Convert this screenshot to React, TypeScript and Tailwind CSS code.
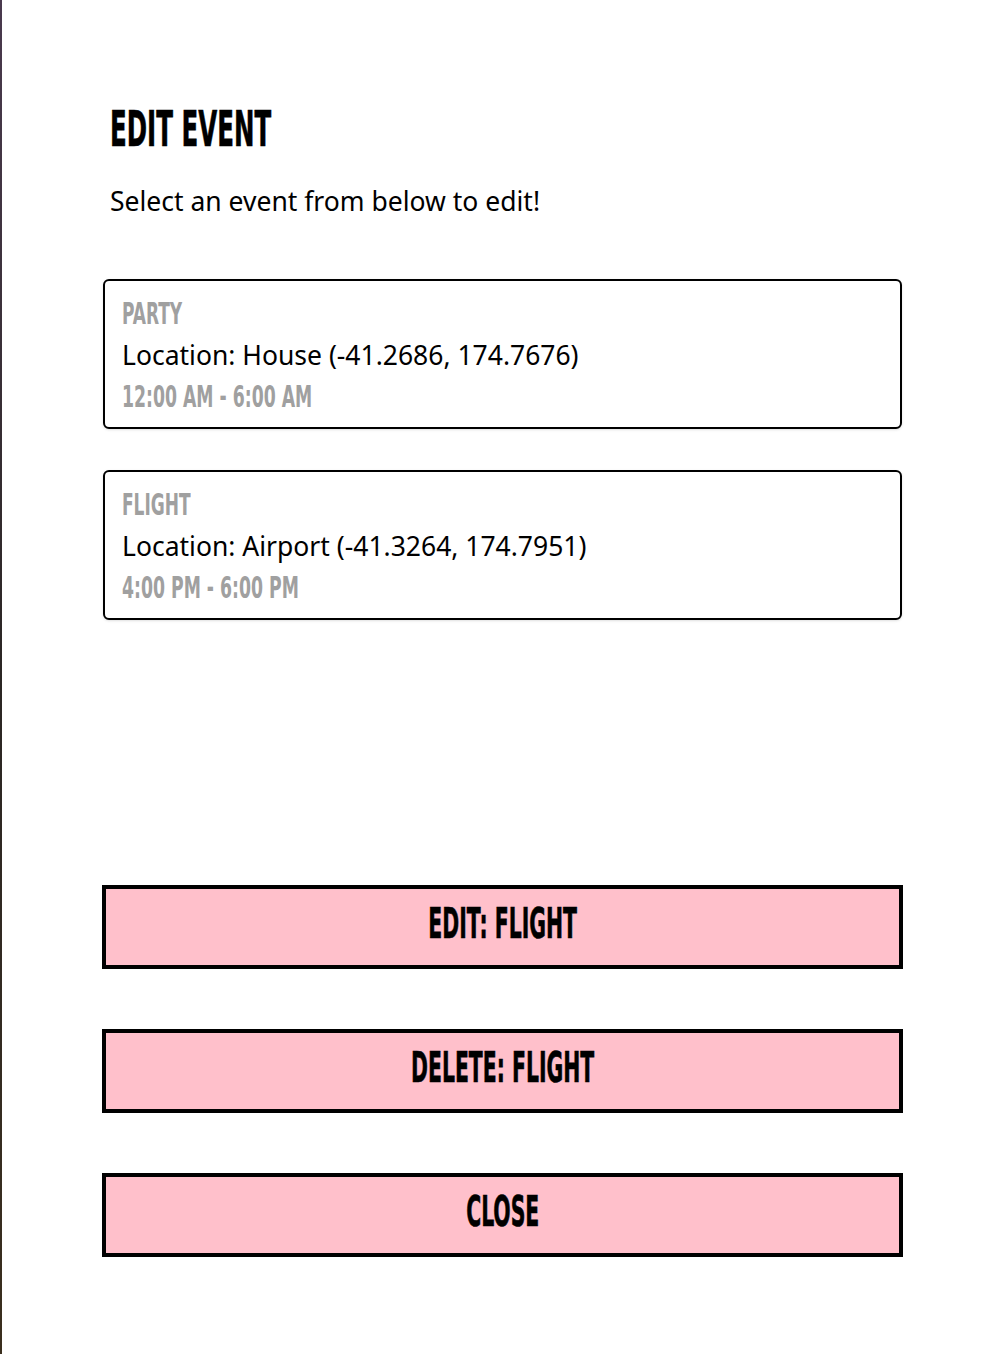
import { ReactNode } from "react";

const events = [
  {
    id: "party",
    title: "Party",
    location: "House (-41.2686, 174.7676)",
    time: "12:00 AM - 6:00 AM",
  },
  {
    id: "flight",
    title: "Flight",
    location: "Airport (-41.3264, 174.7951)",
    time: "4:00 PM - 6:00 PM",
  },
];

const bebas =
  "inline-block font-['Liberation_Sans_Narrow','DejaVu_Sans_Condensed',sans-serif] font-bold uppercase whitespace-nowrap";

// stand-in for Bebas Neue: condensed bold squeezed sideways
function Bebas({ children, squeeze }: { children: ReactNode; squeeze: string }) {
  return <span className={`${bebas} ${squeeze}`}>{children}</span>;
}

function EventCard({ title, location, time }: { title: string; location: string; time: string }) {
  return (
    <div className="flex h-[150px] flex-col rounded-md border-2 border-black bg-white px-[17px] pt-[16px] shadow-sm">
      <div className="h-[31px] text-[31px] leading-[31px] text-[#a0a0a0]">
        <Bebas squeeze="origin-left scale-x-[0.61]">{title}</Bebas>
      </div>
      <div className="mt-[10px] h-[34px] text-[26.5px] leading-[34px] text-black">
        Location: {location}
      </div>
      <div className="mt-[9px] h-[30px] text-[30px] leading-[30px] text-[#a0a0a0]">
        <Bebas squeeze="origin-left scale-x-[0.64]">{time}</Bebas>
      </div>
    </div>
  );
}

function PinkButton({ label }: { label: string }) {
  return (
    <button className="flex h-[84px] w-full items-center justify-center border-4 border-black bg-[#ffc0cb] pb-[6px] text-[42px] leading-[42px] text-black">
      <Bebas squeeze="origin-center scale-x-[0.54] [-webkit-text-stroke:0.6px_black]">{label}</Bebas>
    </button>
  );
}

export default function App() {
  return (
    <div className="flex min-h-screen bg-white font-['Noto_Sans',sans-serif]">
      <div className="w-[2px] shrink-0 bg-gradient-to-b from-[#4a3a4e] via-[#2b2624] to-[#3b2f1e]" />

      <main className="flex-1 pl-[100px]">
        <div className="flex w-[801px] flex-col pb-[98px] pt-[103px]">
          <h1 className="h-[49px] pl-[8px] text-[49px] leading-[49px] text-black">
            <Bebas squeeze="origin-left scale-x-[0.556] [-webkit-text-stroke:0.6px_black]">Edit Event</Bebas>
          </h1>

          <p className="mt-[33px] h-[32px] pl-[8px] text-[26.5px] leading-[32px] text-black">
            Select an event from below to edit!
          </p>

          <div className="mt-[62px] flex flex-col gap-[41px] px-[1px]">
            {events.map((ev) => (
              <EventCard key={ev.id} title={ev.title} location={ev.location} time={ev.time} />
            ))}
          </div>

          <div className="mt-[265px] flex flex-col gap-[60px]">
            <PinkButton label="Edit: Flight" />
            <PinkButton label="Delete: Flight" />
            <PinkButton label="Close" />
          </div>
        </div>
      </main>
    </div>
  );
}
